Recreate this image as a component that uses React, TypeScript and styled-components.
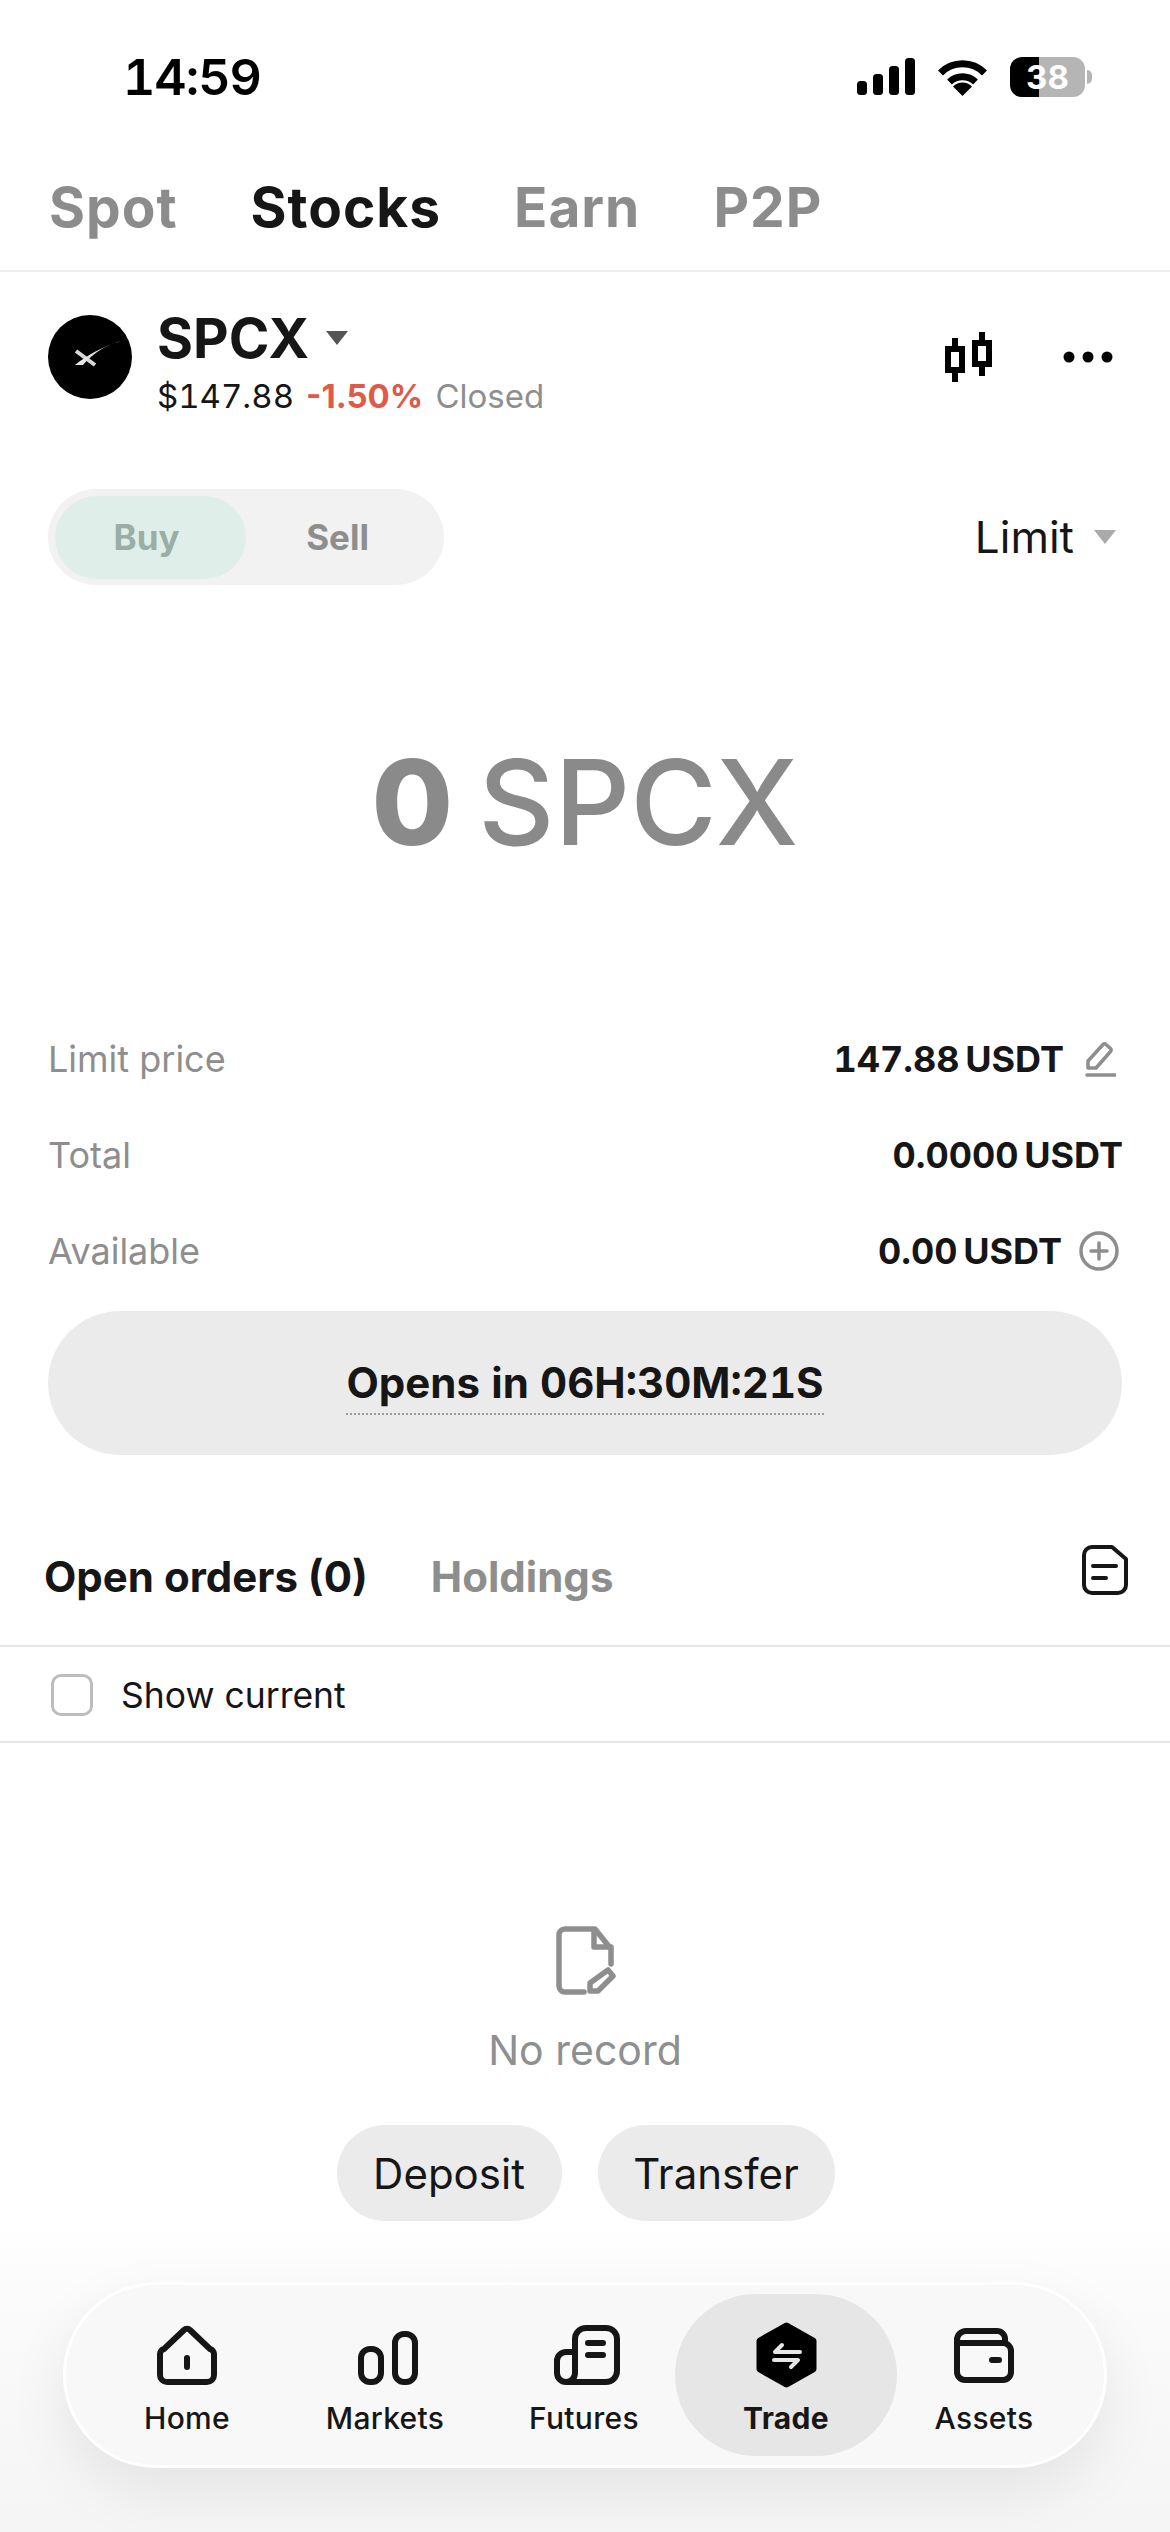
import styled, { createGlobalStyle } from "styled-components";

const GlobalStyle = createGlobalStyle`
  html, body {
    margin: 0;
    padding: 0;
    background: #fff;
  }
  * {
    box-sizing: border-box;
  }
`;

const Page = styled.div`
  width: 1170px;
  height: 2532px;
  overflow: hidden;
  display: flex;
  flex-direction: column;
  background: #fff;
  color: #161616;
  font-family: Inter, "Liberation Sans", sans-serif;
`;

const StatusBar = styled.div`
  height: 154px;
  flex-shrink: 0;
  display: flex;
  align-items: center;
  justify-content: space-between;
  padding: 0 85px 0 123px;
`;

const Clock = styled.span`
  font-size: 50px;
  font-weight: 600;
  font-variant-numeric: tabular-nums;
  letter-spacing: -1px;
  color: #000;
`;

const StatusIcons = styled.div`
  display: flex;
  align-items: center;
  gap: 22px;
`;

const Battery = styled.div`
  position: relative;
  width: 75px;
  height: 40px;
  border-radius: 12px;
  background: linear-gradient(90deg, #000 39%, #b5b5b5 39%);
  color: #fff;
  font-size: 33px;
  font-weight: 700;
  line-height: 40px;
  text-align: center;

  &::after {
    content: "";
    position: absolute;
    right: -7px;
    top: 13px;
    width: 5px;
    height: 14px;
    border-radius: 0 5px 5px 0;
    background: #b5b5b5;
  }
`;

const TopTabs = styled.div`
  height: 118px;
  flex-shrink: 0;
  display: flex;
  align-items: flex-start;
  gap: 73px;
  padding: 25px 0 0 49px;
  border-bottom: 2px solid #eeeeee;
`;

const TopTab = styled.span<{ $active?: boolean }>`
  font-size: 55px;
  line-height: 56px;
  font-weight: 700;
  letter-spacing: 1px;
  color: ${(p) => (p.$active ? "#161616" : "#8c8c8c")};
`;

const Header = styled.div`
  height: 217px;
  flex-shrink: 0;
  display: flex;
  justify-content: space-between;
  padding: 43px 57px 0 48px;
`;

const Ticker = styled.div`
  display: flex;
  gap: 25px;
`;

const TickerName = styled.div`
  display: flex;
  align-items: center;
  gap: 17px;
  font-size: 55px;
  line-height: 46px;
  font-weight: 700;
`;

const Caret = styled.i<{ $color: string }>`
  display: block;
  width: 0;
  height: 0;
  border-left: 11px solid transparent;
  border-right: 11px solid transparent;
  border-top: 14px solid ${(p) => p.$color};
`;

const Quote = styled.div`
  display: flex;
  gap: 12px;
  margin-top: 15px;
  font-size: 33px;
  line-height: 40px;
`;

const QuotePrice = styled.span`
  font-variant-numeric: tabular-nums;
`;

const QuoteChange = styled.span`
  color: #e05a4a;
  font-weight: 700;
`;

const QuoteStatus = styled.span`
  color: #8e8e8e;
`;

const HeaderActions = styled.div`
  display: flex;
  gap: 70px;
  align-items: center;
  height: 84px;
`;

const OrderBar = styled.div`
  height: 96px;
  flex-shrink: 0;
  display: flex;
  align-items: center;
  justify-content: space-between;
  padding: 0 54px 0 48px;
`;

const SideToggle = styled.div`
  width: 396px;
  height: 96px;
  padding: 7px;
  display: flex;
  align-items: center;
  border-radius: 48px;
  background: #f2f2f2;
`;

const SideOption = styled.div<{ $active?: boolean }>`
  width: 191px;
  height: 83px;
  display: flex;
  align-items: center;
  justify-content: center;
  padding-right: 8px;
  border-radius: 42px;
  font-size: 35px;
  font-weight: 700;
  background: ${(p) => (p.$active ? "#e0eee9" : "transparent")};
  color: ${(p) => (p.$active ? "#9aaea6" : "#8e8e8e")};
`;

const OrderType = styled.div`
  display: flex;
  align-items: center;
  gap: 20px;
  font-size: 44px;
`;

const Amount = styled.div`
  height: 426px;
  flex-shrink: 0;
  padding-top: 8px;
  display: flex;
  align-items: center;
  justify-content: center;
  gap: 25px;
  font-size: 118px;
  font-weight: 500;
  color: #8a8a8a;
`;

const AmountValue = styled.b`
  font-weight: 800;
`;

const Row = styled.div`
  height: 96px;
  flex-shrink: 0;
  display: flex;
  align-items: center;
  justify-content: space-between;
  padding: 0 47px 0 48px;
`;

const RowLabel = styled.span`
  font-size: 36px;
  color: #8e8e8e;
`;

const RowValue = styled.div`
  display: flex;
  align-items: center;
  font-size: 36px;
  font-weight: 700;
  font-variant-numeric: tabular-nums;
  word-spacing: -4px;
`;

const RowIcon = styled.span<{ $gap: number; $inset: number }>`
  display: flex;
  margin-left: ${(p) => p.$gap}px;
  margin-right: ${(p) => p.$inset}px;
`;

const OpensButton = styled.div`
  height: 144px;
  flex-shrink: 0;
  margin: 12px 48px 0;
  padding-top: 5px;
  display: flex;
  align-items: center;
  justify-content: center;
  border-radius: 72px;
  background: #ebebeb;
`;

const OpensText = styled.span`
  font-size: 42px;
  font-weight: 700;
  font-variant-numeric: tabular-nums;
  line-height: 52px;
  padding-bottom: 4px;
  border-bottom: 2px dotted #9a9a9a;
`;

const OrderTabs = styled.div`
  height: 192px;
  flex-shrink: 0;
  display: flex;
  align-items: center;
  gap: 63px;
  padding: 52px 42px 0 44px;
  border-bottom: 2px solid #e6e6e6;
`;

const OrderTab = styled.span<{ $active?: boolean }>`
  font-size: 42px;
  font-weight: 700;
  color: ${(p) => (p.$active ? "#161616" : "#8e8e8e")};
`;

const NoteIcon = styled.svg`
  margin-left: auto;
  margin-top: -13px;
`;

const FilterRow = styled.div`
  height: 96px;
  flex-shrink: 0;
  display: flex;
  align-items: center;
  gap: 28px;
  padding: 2px 0 0 51px;
  border-bottom: 2px solid #e6e6e6;
  font-size: 35.5px;
`;

const CheckBox = styled.span`
  width: 42px;
  height: 42px;
  border: 3px solid #bdbdbd;
  border-radius: 10px;
`;

const EmptyState = styled.div`
  flex-shrink: 0;
  padding: 183px 0 0 2px;
  display: flex;
  flex-direction: column;
  align-items: center;
`;

const EmptyText = styled.div`
  margin: 30px 0 0 -2px;
  font-size: 41px;
  line-height: 50px;
  color: #8e9090;
`;

const EmptyActions = styled.div`
  display: flex;
  gap: 36px;
  margin: 50px 0 0 -1px;
`;

const PillButton = styled.div<{ $width: number }>`
  width: ${(p) => p.$width}px;
  height: 96px;
  display: flex;
  align-items: center;
  justify-content: center;
  border-radius: 48px;
  background: #ebebeb;
  font-size: 42px;
`;

const Dock = styled.div`
  flex: 1;
  padding: 61px 63px 0;
  background: linear-gradient(180deg, #ffffff 0%, #fafafa 30%, #f5f5f5 100%);
`;

const Nav = styled.div`
  height: 186px;
  display: grid;
  grid-template-columns: 198px 198px 200px 204px 192px;
  align-items: center;
  padding-left: 22px;
  border: 3px solid #fff;
  border-radius: 93px;
  background: #f8f8f8;
  box-shadow: 0 24px 60px rgba(0, 0, 0, 0.08);
`;

const NavItem = styled.div<{ $active?: boolean }>`
  width: ${(p) => (p.$active ? "222px" : "auto")};
  height: 162px;
  justify-self: center;
  display: flex;
  flex-direction: column;
  align-items: center;
  padding-top: 31px;
  border-radius: 81px;
  background: ${(p) => (p.$active ? "#e6e6e6" : "transparent")};
  font-size: 30px;
  line-height: 36px;
  letter-spacing: 0.3px;
  font-weight: ${(p) => (p.$active ? 700 : 500)};
  color: #161616;
  white-space: nowrap;
`;

const NavIconSlot = styled.div`
  height: 60px;
  margin-bottom: 15px;
  display: flex;
  align-items: center;
  justify-content: center;

  svg {
    flex-shrink: 0;
  }
`;

const SignalIcon = () => (
  <svg width="58" height="38" viewBox="0 0 58 38">
    <rect x="0" y="23" width="10" height="14" rx="3.5" />
    <rect x="16" y="16" width="10" height="21" rx="3.5" />
    <rect x="32" y="8" width="10" height="29" rx="3.5" />
    <rect x="48" y="0" width="10" height="37" rx="3.5" />
  </svg>
);

const WifiIcon = () => (
  <svg width="51" height="38" viewBox="0 0 51 38" fill="none" stroke="#000" strokeWidth="7">
    <path d="M3.5 15A31 31 0 0 1 47.5 15" />
    <path d="M12.5 24A19 19 0 0 1 38.5 24" />
    <path d="M25.5 38L16 28.5A13.5 13.5 0 0 1 35 28.5Z" fill="#000" stroke="none" />
  </svg>
);

const SpaceLogo = () => (
  <svg width="84" height="84" viewBox="0 0 84 84">
    <circle cx="42" cy="42" r="42" fill="#000" />
    <path d="M28 36L47 50" stroke="#d8d8d8" strokeWidth="4" />
    <path d="M27 50C38 41 55 31 74 26C60 29 46 37 35 50Z" fill="#e4e4e4" />
  </svg>
);

const CandleIcon = () => (
  <svg width="48" height="50" viewBox="0 0 48 50" fill="none" stroke="#000" strokeWidth="6">
    <rect x="3" y="17" width="14" height="21" />
    <path d="M10 6V17M10 38V50" />
    <rect x="30" y="11" width="14" height="21" />
    <path d="M37 0V11M37 32V44" />
  </svg>
);

const DotsIcon = () => (
  <svg width="50" height="12" viewBox="0 0 50 12" fill="#000">
    <circle cx="6" cy="6" r="5.5" />
    <circle cx="25" cy="6" r="5.5" />
    <circle cx="44" cy="6" r="5.5" />
  </svg>
);

const EditIcon = () => (
  <svg width="32" height="36" viewBox="0 0 32 36" fill="none" stroke="#8e8e8e" strokeWidth="3.5" strokeLinejoin="round" strokeLinecap="round">
    <path d="M4 27V20L19 3.5a2 2 0 0 1 3 0l4.500 4a2 2 0 0 1 0 3L12 27Z" />
    <path d="M3 34H31" />
  </svg>
);

const PlusCircleIcon = () => (
  <svg width="40" height="40" viewBox="0 0 40 40" fill="none" stroke="#8e8e8e" strokeWidth="3.5" strokeLinecap="round">
    <circle cx="20" cy="20" r="18" />
    <path d="M20 12V28M12 20H28" />
  </svg>
);

const EmptyDocIcon = () => (
  <svg width="60" height="69" viewBox="0 0 60 69" fill="none" stroke="#8e8e8e" strokeWidth="5.500" strokeLinejoin="round" strokeLinecap="round">
    <path d="M28 66H9a6 6 0 0 1-6-6V9a6 6 0 0 1 6-6H39L55 23V38" />
    <path d="M38 4V21H55" />
    <path d="M34 65V57L52 44L57 50L42 65Z" />
  </svg>
);

const HomeIcon = () => (
  <svg width="60" height="60" viewBox="0 0 60 60" fill="none" stroke="#161616" strokeWidth="6" strokeLinejoin="round" strokeLinecap="round">
    <path d="M27 5a4 4 0 0 1 6 0L53 24a5 5 0 0 1 4 5V50a7 7 0 0 1-7 7H10a7 7 0 0 1-7-7V29a5 5 0 0 1 4-5Z" />
    <path d="M30 33V42" />
  </svg>
);

const MarketsIcon = () => (
  <svg width="66" height="60" viewBox="0 0 66 60" fill="none" stroke="#161616" strokeWidth="6">
    <rect x="9" y="24" width="20" height="33" rx="9" />
    <rect x="43" y="9" width="20" height="48" rx="9" />
  </svg>
);

const FuturesIcon = () => (
  <svg width="72" height="60" viewBox="0 0 72 60" fill="none" stroke="#161616" strokeWidth="6" strokeLinecap="round">
    <path d="M27 27H18a9 9 0 0 0-9 9V48a9 9 0 0 0 9 9H58a11 11 0 0 0 11-11V14a11 11 0 0 0-11-11H38a11 11 0 0 0-11 11V48a9 9 0 0 1-9 9" />
    <path d="M40 18H55M40 30H55" />
  </svg>
);

const TradeIcon = () => (
  <svg width="61" height="66" viewBox="0 0 61 66">
    <path d="M30.500 4L57 19V47L30.500 62L4 47V19Z" fill="#000" stroke="#000" strokeWidth="7" strokeLinejoin="round" />
    <path d="M26 23L19 30H44M35 45L42 38H18" fill="none" stroke="#e6e6e6" strokeWidth="4" strokeLinejoin="round" strokeLinecap="round" />
  </svg>
);

const AssetsIcon = () => (
  <svg width="60" height="60" viewBox="0 0 60 60" fill="none" stroke="#161616" strokeWidth="6" strokeLinecap="round">
    <path d="M3 15V47a8 8 0 0 0 8 8H49a8 8 0 0 0 8-8V26a8 8 0 0 0-8-8H6" />
    <path d="M3 15a9 9 0 0 1 9-9H43a8 8 0 0 1 8 8V18" />
    <path d="M38 35H45" />
  </svg>
);

const App = () => {
  return (
    <Page>
      <GlobalStyle />
      <StatusBar>
        <Clock>14:59</Clock>
        <StatusIcons>
          <SignalIcon />
          <WifiIcon />
          <Battery>38</Battery>
        </StatusIcons>
      </StatusBar>

      <TopTabs>
        <TopTab>Spot</TopTab>
        <TopTab $active>Stocks</TopTab>
        <TopTab>Earn</TopTab>
        <TopTab>P2P</TopTab>
      </TopTabs>

      <Header>
        <Ticker>
          <SpaceLogo />
          <div>
            <TickerName>
              SPCX
              <Caret $color="#555" />
            </TickerName>
            <Quote>
              <QuotePrice>$147.88</QuotePrice>
              <QuoteChange>-1.50%</QuoteChange>
              <QuoteStatus>Closed</QuoteStatus>
            </Quote>
          </div>
        </Ticker>
        <HeaderActions>
          <CandleIcon />
          <DotsIcon />
        </HeaderActions>
      </Header>

      <OrderBar>
        <SideToggle>
          <SideOption $active>Buy</SideOption>
          <SideOption>Sell</SideOption>
        </SideToggle>
        <OrderType>
          Limit
          <Caret $color="#aaa" />
        </OrderType>
      </OrderBar>

      <Amount>
        <AmountValue>0</AmountValue>
        <span>SPCX</span>
      </Amount>

      <Row>
        <RowLabel>Limit price</RowLabel>
        <RowValue>
          147.88 USDT
          <RowIcon $gap={20} $inset={7}>
            <EditIcon />
          </RowIcon>
        </RowValue>
      </Row>
      <Row>
        <RowLabel>Total</RowLabel>
        <RowValue>0.0000 USDT</RowValue>
      </Row>
      <Row>
        <RowLabel>Available</RowLabel>
        <RowValue>
          0.00 USDT
          <RowIcon $gap={17} $inset={4}>
            <PlusCircleIcon />
          </RowIcon>
        </RowValue>
      </Row>

      <OpensButton>
        <OpensText>Opens in 06H:30M:21S</OpensText>
      </OpensButton>

      <OrderTabs>
        <OrderTab $active>Open orders (0)</OrderTab>
        <OrderTab>Holdings</OrderTab>
        <NoteIcon width="46" height="50" viewBox="0 0 46 50" fill="none" stroke="#161616" strokeWidth="4" strokeLinecap="round" strokeLinejoin="round">
          <path d="M10 2H30L44 14V40a8 8 0 0 1-8 8H10a8 8 0 0 1-8-8V10a8 8 0 0 1 8-8Z" />
          <path d="M11 21H34M11 33H24" />
        </NoteIcon>
      </OrderTabs>

      <FilterRow>
        <CheckBox />
        Show current
      </FilterRow>

      <EmptyState>
        <EmptyDocIcon />
        <EmptyText>No record</EmptyText>
        <EmptyActions>
          <PillButton $width={225}>Deposit</PillButton>
          <PillButton $width={237}>Transfer</PillButton>
        </EmptyActions>
      </EmptyState>

      <Dock>
        <Nav>
          <NavItem>
            <NavIconSlot><HomeIcon /></NavIconSlot>
            Home
          </NavItem>
          <NavItem>
            <NavIconSlot><MarketsIcon /></NavIconSlot>
            Markets
          </NavItem>
          <NavItem>
            <NavIconSlot><FuturesIcon /></NavIconSlot>
            Futures
          </NavItem>
          <NavItem $active>
            <NavIconSlot><TradeIcon /></NavIconSlot>
            Trade
          </NavItem>
          <NavItem>
            <NavIconSlot><AssetsIcon /></NavIconSlot>
            Assets
          </NavItem>
        </Nav>
      </Dock>
    </Page>
  );
};

export default App;
